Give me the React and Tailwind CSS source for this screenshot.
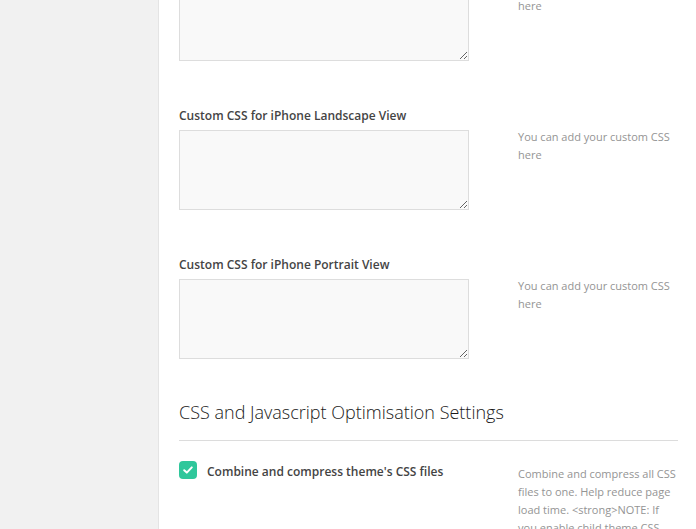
import React from 'react';

const font = { fontFamily: '"Open Sans", "Liberation Sans", sans-serif' };

function HelpText({ children }) {
    return (
        <p className="w-[159px] text-[11px] leading-[18px] text-[#949494]">{children}</p>
    );
}

function CssField({ label }) {
    return (
        <div className="flex mb-[45px]">
            <div className="w-[339px] shrink-0">
                <p className="text-[12px] leading-[18px] font-semibold text-[#444] mt-[1px] mb-[5px]">{label}</p>
                <textarea
                    readOnly
                    className="block w-[290px] h-[80px] bg-[#f9f9f9] border border-[#dddddd] outline-none resize"
                />
            </div>
            <div className="pt-[22px]">
                <HelpText>You can add your custom CSS here</HelpText>
            </div>
        </div>
    );
}

export default function App() {
    const fields = [
        'Custom CSS for iPad Portrait View',
        'Custom CSS for iPhone Landscape View',
        'Custom CSS for iPhone Portrait View',
    ];

    return (
        <div className="flex h-[529px] overflow-hidden bg-white" style={font}>
            <div className="w-[159px] shrink-0 bg-[#f1f1f1] border-r border-[#e4e4e4]" />
            <div className="flex-1 min-w-0 pl-5 pr-[18px] mt-[-43px]">
                {fields.map((f) => (
                    <CssField key={f} label={f} />
                ))}
                <h2 className="mt-[-4px] text-[18px] leading-[24px] font-light text-[#1a1a1a] pb-[16px] border-b border-[#dcdcdc]">
                    CSS and Javascript Optimisation Settings
                </h2>
                <div className="flex pt-[20px]">
                    <div className="w-[339px] shrink-0 flex items-start gap-[10px]">
                        <span className="w-[18px] h-[18px] rounded-[4px] bg-[#2fc79b] flex items-center justify-center shrink-0">
                            <svg width="12" height="12" viewBox="0 0 12 12" fill="none">
                                <path d="M2.2 6.2 L4.8 8.6 L9.8 3.4" stroke="white" strokeWidth="2" strokeLinecap="round" strokeLinejoin="round" />
                            </svg>
                        </span>
                        <span className="text-[12px] leading-[18px] font-semibold text-[#444] mt-[2px]">
                            Combine and compress theme's CSS files
                        </span>
                    </div>
                    <div className="pt-[4px]">
                        <HelpText>
                            Combine and compress all CSS files to one. Help reduce page load time. &lt;strong&gt;NOTE: If you enable child theme CSS compression, make sure to flush the cache.
                        </HelpText>
                    </div>
                </div>
            </div>
        </div>
    );
}
